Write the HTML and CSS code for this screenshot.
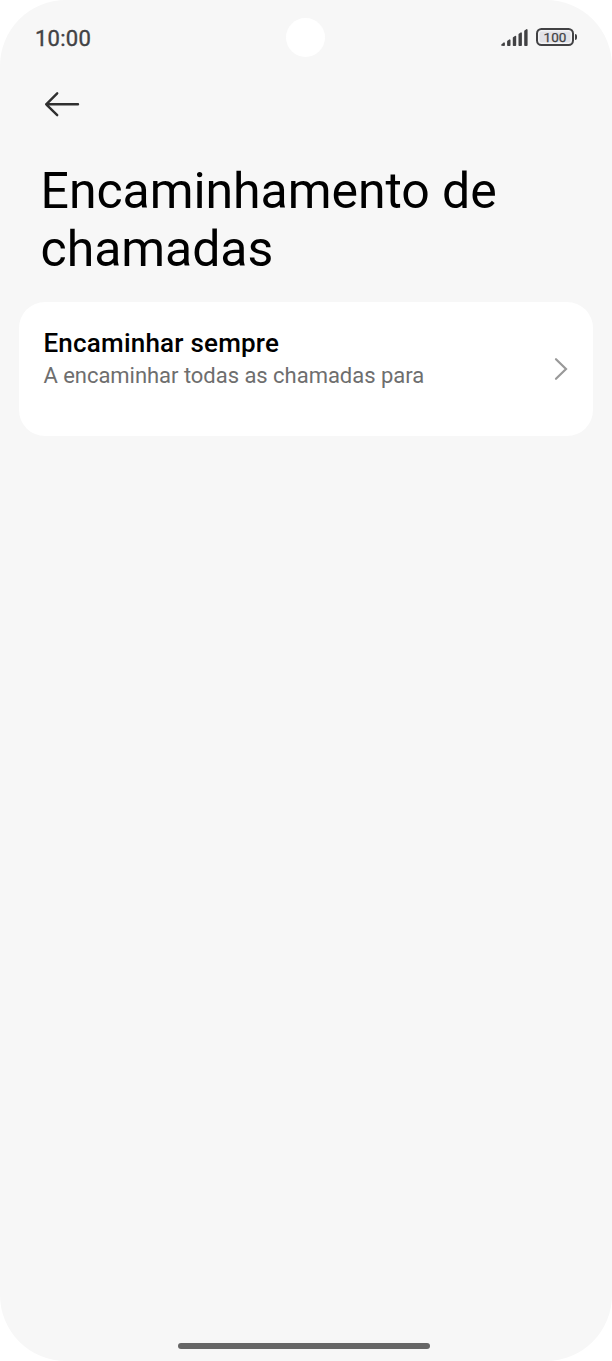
FILE: index.html
```html
<!DOCTYPE html>
<html lang="pt">
<head>
<meta charset="utf-8">
<title>Encaminhamento de chamadas</title>
<link rel="stylesheet" href="styles.css">
</head>
<body>
<div class="screen">
  <header class="status-bar">
    <span class="clock">10:00</span>
    <span class="camera"></span>
    <div class="indicators">
      <svg class="signal" width="27" height="18" viewBox="0 0 27 18" fill="#424244" stroke="#424244" stroke-width="1.6" stroke-linejoin="round">
        <path d="M.9 16L3.1 14.2V16.2ZM6.9 12.4L8.7 11.2V16.3H6.9ZM12.6 9L14.4 7.6V16.3H12.6ZM18.3 5.4L20.1 4.2V16.3H18.3ZM24 2.2L25.8 .9V16.3H24Z"/>
      </svg>
      <div class="battery"><span class="level">100</span></div>
    </div>
  </header>
  <nav class="toolbar">
    <a class="back" href="#" aria-label="Voltar">
      <svg width="36" height="26" viewBox="0 0 36 26" fill="none" stroke="#303030" stroke-width="2.4" stroke-linecap="round" stroke-linejoin="round">
        <path d="M34 13.3H2.2M13.2 2.3L2.2 13.3L13.2 24.2"/>
      </svg>
    </a>
  </nav>
  <h1 class="title">Encaminhamento de<br>chamadas</h1>
  <main class="card">
    <div class="text">
      <div class="name">Encaminhar sempre</div>
      <div class="summary">A encaminhar todas as chamadas para</div>
    </div>
    <svg class="chevron" width="14" height="24" viewBox="0 0 14 24" fill="none" stroke="#999" stroke-width="2.2" stroke-linecap="round" stroke-linejoin="miter">
      <path d="M2 2.2L12 12L2 21.8"/>
    </svg>
  </main>
  <div class="home-handle"></div>
</div>
</body>
</html>
```
FILE: styles.css
```css
* { box-sizing: border-box; }
body {
  margin: 0;
  background: #fff;
  font-family: Roboto, "Liberation Sans", sans-serif;
}
.screen {
  display: flex;
  flex-direction: column;
  width: 612px;
  height: 1361px;
  border-radius: 66px;
  background: #f7f7f7;
  overflow: hidden;
}
.status-bar {
  display: grid;
  grid-template-columns: 1fr 39px 1fr;
  align-items: center;
  height: 74px;
  padding: 0 35px;
}
.clock {
  font-size: 22px;
  line-height: 26px;
  font-weight: 400;
  -webkit-text-stroke: 0.4px #424244;
  letter-spacing: 0.25px;
  color: #424244;
  padding-top: 3px;
}
.camera {
  width: 39px;
  height: 39px;
  margin-left: -0.5px;
  border-radius: 50%;
  background: #fff;
}
.indicators {
  display: flex;
  justify-content: flex-end;
  align-items: center;
  gap: 8px;
}
.signal { margin-top: 1px; }
.battery {
  display: flex;
  align-items: center;
}
.battery::after {
  content: "";
  width: 2px;
  height: 6px;
  margin-left: 1px;
  border-radius: 0 2px 2px 0;
  background: #424244;
}
.level {
  width: 38px;
  height: 18px;
  border: 2px solid #424244;
  border-radius: 5.5px;
  background: #e2e2e7;
  box-shadow: inset 0 0 0 1.5px #f3f3f5;
  color: #424244;
  font-size: 13.5px;
  font-weight: 400;
  -webkit-text-stroke: 0.25px #424244;
  letter-spacing: 0.1px;
  line-height: 15px;
  text-align: center;
}
.toolbar {
  height: 87.5px;
  padding: 17px 44px 0;
}
.back { display: block; width: 36px; height: 26px; }
.title {
  margin: 0;
  padding-left: 40.6px;
  font-size: 50px;
  line-height: 58.6px;
  letter-spacing: -0.07px;
  font-weight: 400;
  color: #000;
}
.card {
  display: flex;
  align-items: center;
  justify-content: space-between;
  height: 134px;
  margin: 23.3px 19px 0;
  padding: 0 25px 0 24.4px;
  border-radius: 26px;
  background: #fff;
}
.text {
  align-self: flex-start;
  padding-top: 26px;
}
.name {
  font-size: 26px;
  line-height: 31px;
  font-weight: 500;
  letter-spacing: 0.22px;
  color: #000;
}
.summary {
  margin-top: 4px;
  font-size: 22px;
  line-height: 26px;
  letter-spacing: -0.03px;
  color: #6e6e6e;
}
.home-handle {
  width: 252px;
  height: 6px;
  margin: auto 0 12px 178px;
  border-radius: 3px;
  background: #666;
}
```
